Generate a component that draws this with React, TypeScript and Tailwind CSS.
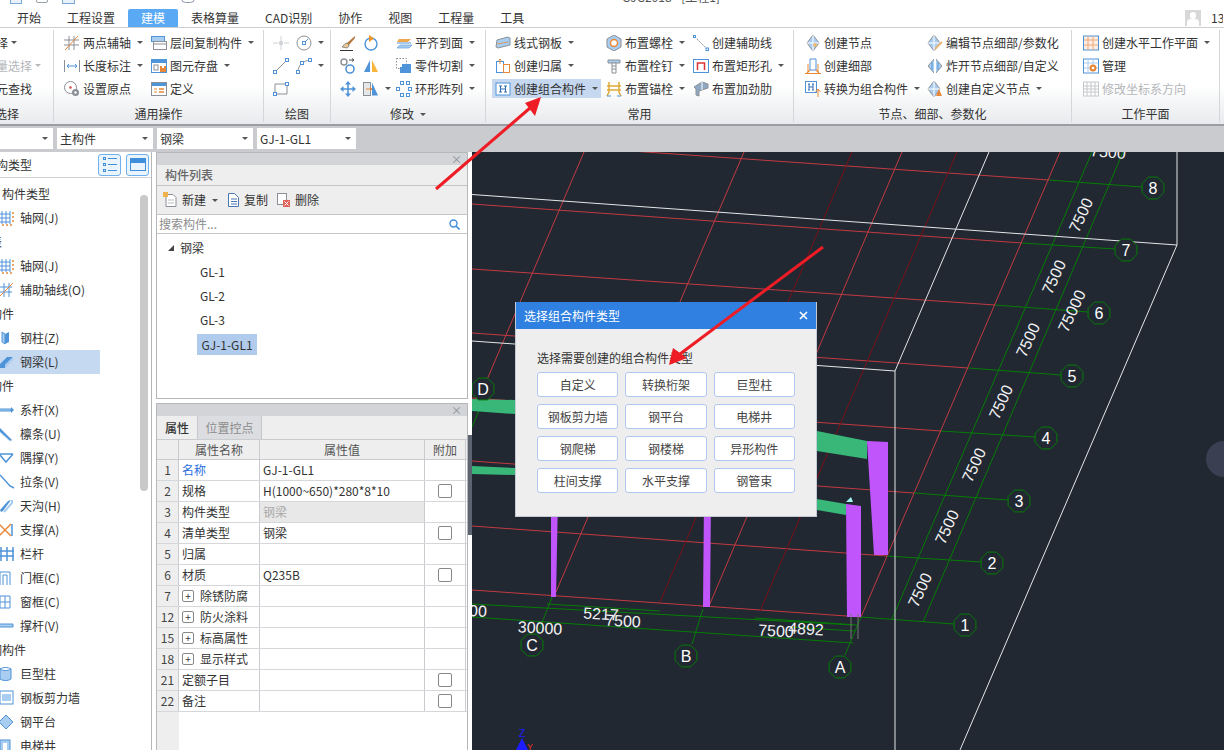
import React from "react";

const B = "#4f94d8";
const LB = "#a9cdf0";
const O = "#e8893a";
const G = "#8b9096";

const Ic = ({ children, w = 16 }: { children?: React.ReactNode; w?: number }) => (
  <svg width={w} height={16} viewBox={`0 0 ${w} 16`} fill="none" className="shrink-0">
    {children}
  </svg>
);

const icons: Record<string, React.ReactNode> = {
  twoAxis: (<><path d="M0 5h15M0 10h15M5 1v14M10 1v14" stroke={G} /><path d="M1 15 14 1" stroke={O} /></>),
  copyLayer: (<><rect x=".5" y="1.5" width="13" height="5" fill={LB} stroke={B} /><rect x="2.5" y="6.5" width="13" height="8" fill="#fff" stroke={G} /><path d="M3 9h12" stroke={G} /></>),
  dim: (<><path d="M.5 2v12M15.5 2v12" stroke={G} /><path d="M3 8h10M3 8l2-2M3 8l2 2M13 8l-2-2M13 8l-2 2" stroke={B} /></>),
  save: (<><rect x=".5" y="1.5" width="15" height="13" fill="#fff" stroke={B} /><rect x="1" y="2" width="14" height="3" fill={B} /><rect x="3" y="7" width="4" height="5" stroke={G} /><rect x="9" y="8" width="6" height="6" fill={O} /><rect x="11" y="8" width="2" height="2" fill="#fff" /></>),
  origin: (<><circle cx="6.5" cy="6.5" r="6" fill="#fff" stroke={G} /><circle cx="6.5" cy="6.5" r="1.3" fill="#d9534f" /><circle cx="11.5" cy="11.5" r="3.5" fill={G} /><circle cx="11.5" cy="11.5" r="1.2" fill="#fff" /></>),
  define: (<><rect x=".5" y="1.5" width="15" height="13" fill="#fff" stroke={G} /><rect x="1" y="2" width="14" height="3" fill={B} /><path d="M3 8h3M3 11h3" stroke={O} /><path d="M8 8h5M8 11h5" stroke={O} strokeWidth="1.5" /></>),
  point: (<><path d="M0 8h5M11 8h5M8 1v5M8 10v5" stroke="#cfd2d6" /><circle cx="8" cy="8" r="2.2" fill="#cfd2d6" /></>),
  circle: (<><circle cx="8" cy="8" r="7" fill="#fff" stroke={G} /><rect x="6.5" y="6.5" width="3" height="3" stroke={B} /><path d="M9 7l3-3" stroke={B} /></>),
  line: (<><path d="M2 14 14 2" stroke={G} /><rect x=".5" y="12.5" width="3" height="3" fill="#fff" stroke={B} /><rect x="12.5" y=".5" width="3" height="3" fill="#fff" stroke={B} /></>),
  arc: (<><path d="M2 14C2 7 7 3 14 2" stroke={G} /><rect x=".5" y="12.5" width="3" height="3" fill="#fff" stroke={B} /><rect x="12.5" y=".5" width="3" height="3" fill="#fff" stroke={B} /><rect x="4.5" y="3.5" width="3" height="3" fill="#fff" stroke={B} /></>),
  rect: (<><path d="M2 3h12l0 10H2z" stroke={G} /><rect x=".5" y="11.5" width="3" height="3" fill="#fff" stroke={B} /><rect x="12.5" y="1.5" width="3" height="3" fill="#fff" stroke={B} /></>),
  brush: (<><path d="M15 1 7 8l2 2 6-7z" fill="#b5763c" /><path d="M7 8c-3 0-3 3-5 4l5 1c2-1 2-2 2-3z" fill="#e7c69a" stroke="#555" strokeWidth=".6" /><path d="M0 15.5h13" stroke="#333" /></>),
  rotate: (<><circle cx="8" cy="9" r="6" stroke={B} strokeWidth="1.4" /><path d="M6 0v7l5-3.5z" fill="#ee9326" /></>),
  align: (<><path d="M3 4h12L12 7H1z" fill="#f0a64a" /><path d="M1 8h14" stroke={B} /><path d="M4 10h12l-3 3H1z" fill={LB} stroke={B} strokeWidth=".6" /></>),
  gears: (<><circle cx="4" cy="4" r="3" fill="#fff" stroke={G} strokeWidth="1.4" /><circle cx="10" cy="11" r="4" fill="#fff" stroke={B} strokeWidth="1.6" /><path d="M9 2h5l-2-1.5M14 2l-2 1.5" stroke="#555" /></>),
  mirror: (<><path d="M7 2v12H1z" fill={B} /><path d="M9 2v12h6z" fill="#f6b73c" /></>),
  cut: (<><rect x=".5" y=".5" width="10" height="10" stroke={G} strokeDasharray="1.5 1.5" /><path d="M6 6h9v9H4V9h2z" fill={B} /></>),
  move: (<><path d="M8 1v14M1 8h14" stroke={B} strokeWidth="1.6" /><path d="M8 0l3 3.5H5zM8 16l3-3.5H5zM0 8l3.5-3v6zM16 8l-3.5-3v6z" fill={B} /></>),
  flip: (<><rect x=".5" y="1.5" width="7" height="13" fill="#e6e7e9" stroke={G} /><path d="M9 1.5 15 14.5H9z" fill={B} /><path d="M3 8h6M7 6l2 2-2 2" stroke={O} /></>),
  array: (<><g stroke={B} fill="#fff"><rect x="4.5" y=".5" width="3" height="3" /><rect x="10.5" y=".5" width="3" height="3" /><rect x=".5" y="6.5" width="3" height="3" /><rect x="12.5" y="6.5" width="3" height="3" /><rect x="4.5" y="12.5" width="3" height="3" /><rect x="10.5" y="12.5" width="3" height="3" /></g></>),
  plate: (<><path d="M2 5 13 2l2 1v7L3 13l-2-1z" fill={LB} stroke={G} /><path d="M2 9l11-2" stroke="#d49a5a" /></>),
  owner: (<><rect x="1.5" y="3.5" width="7" height="11" fill="#fff" stroke={B} /><rect x="8.5" y="6.5" width="6" height="8" fill="#fff" stroke={O} /><path d="M5 6V1M3.5 2.5 5 1l1.5 1.5" stroke={O} /></>),
  combo: (<><rect x="1" y="2" width="14" height="12" fill="#fff" stroke={B} /><path d="M4 5h3M4 11h3M5.500 5v6M9 5h3M9 11h3M10.500 5v6M5.500 8h5" stroke="#2f6eb5" /></>),
  bolt: (<><path d="M8 0l7 4v8l-7 4-7-4V4z" fill={LB} stroke={G} /><circle cx="8" cy="8" r="3.5" fill="#fff" stroke={O} strokeWidth="1.5" /></>),
  stud: (<><path d="M2 2h12v3H2z" fill={LB} stroke={G} /><path d="M6 5h4v10H6z" fill="#fff" stroke={G} /><path d="M6 8h4M6 11h4" stroke={G} /></>),
  anchor: (<><path d="M3 1v10l-2 4M13 1v10l2 4M1 5h14M1 9h14" stroke="#e0a93a" strokeWidth="1.5" /><path d="M1 15h4M11 15h4" stroke={B} /></>),
  aux: (<><path d="M2 2l12 12" stroke={G} strokeDasharray="2 1" /><rect x=".5" y=".5" width="2" height="2" stroke={B} /><rect x="13" y="13" width="2.500" height="2.500" stroke={B} /></>),
  rectHole: (<><rect x=".5" y="1.5" width="15" height="13" fill="#fff" stroke={B} /><path d="M4.500 12V5h7v7" stroke="#d33" strokeWidth="1.500" /></>),
  rib: (<><path d="M1 6l8-5 6 2v4l-6 2-3 1v5l-3-1V8z" fill="#8fa9c4" stroke={G} /><path d="M9 1v8" stroke="#fff" /></>),
  node: (<><path d="M8 0l6 8-6 8-6-8z" fill={LB} stroke={G} /><path d="M8 0v16M2 8h12" stroke="#fff" /><circle cx="10" cy="10" r="2" fill="#e9b876" /></>),
  detail: (<><path d="M5 1h6v11H5z" fill="#fff" stroke={B} /><path d="M5 12 2 15M11 12l3 3M0 15.500h16" stroke={O} strokeWidth="1.200" /><path d="M3 6v8M13 6v8" stroke={O} /></>),
  convert: (<><rect x=".5" y=".5" width="11" height="11" fill="#fff" stroke={B} /><path d="M3 3h2M3 9h2M4 3v6M7 3h2M7 9h2M8 3v6M4 6h4" stroke="#2f6eb5" /><path d="M13 8v8M10.500 11 13 8l2.500 3" stroke={O} /></>),
  nodeEdit: (<><path d="M7 0l6 8-6 8-6-8z" fill={LB} stroke={G} /><path d="M7 0v16M1 8h12" stroke="#fff" /><path d="M8 14l7-7" stroke="#e9b876" strokeWidth="2" /></>),
  nodeBoom: (<><path d="M8 0l7 8-7 8-7-8z" fill={LB} stroke={G} /><path d="M8 0v16" stroke="#fff" strokeWidth="2" /><path d="M5 4v8M11 4v8" stroke={B} /></>),
  nodeNew: (<><path d="M7 0l6 8-6 8-6-8z" fill={LB} stroke={G} /><path d="M7 0v16M1 8h12" stroke="#fff" /><path d="M12 8l3 7H9z" fill={O} /></>),
  plane: (<><rect x=".5" y="1" width="15" height="14" fill="#fdeee3" stroke={B} /><path d="M5 1v14M10 1v14M1 5h14M1 10h14" stroke="#eba87a" /></>),
  manage: (<><rect x=".5" y="1" width="15" height="14" fill="#fff" stroke={B} /><path d="M5 1v14M10 1v14M1 5h14M1 10h14" stroke={LB} /><circle cx="10" cy="10" r="3.500" fill={O} /><circle cx="10" cy="10" r="1.300" fill="#fff" /></>),
  coord: (<><rect x=".5" y="1" width="15" height="14" fill="#fff" stroke="#c6c8cb" /><path d="M4 1v14M8 1v14M12 1v14M1 5h14M1 8h14M1 11h14" stroke="#c6c8cb" /></>),
};

const Caret = ({ dim }: { dim?: boolean }) => (
  <span className={`ml-[3px] h-0 w-0 border-x-[3px] border-t-[3px] border-x-transparent ${dim ? "border-t-[#b9b9b9]" : "border-t-[#555555]"}`} />
);

const Item = ({ icon, text, caret, dim, active }: { icon: string; text: string; caret?: boolean; dim?: boolean; active?: boolean }) => (
  <div className={active ? "-ml-[3px] my-[2px] flex h-[19px] w-[109px] items-center gap-[3px] bg-[#c5d8f0] pl-[3px]" : "flex h-[23px] items-center gap-[3px] whitespace-nowrap"}>
    <Ic>{icons[icon]}</Ic>
    <span className={dim ? "text-[#b4b6b9]" : "text-[#333333]"}>{text}</span>
    {caret && <Caret dim={dim} />}
  </div>
);

const Group = ({ w, label, pl, children, labelExtra, labelLeft }: { w: number; label: string; pl: number; children: React.ReactNode; labelExtra?: boolean; labelLeft?: boolean }) => (
  <div className="mt-[2px] flex h-[92px] shrink-0 flex-col overflow-hidden border-r border-[#d5d7da] pt-[1px]" style={{ width: w }}>
    <div className="flex h-[69px]" style={{ paddingLeft: pl }}>{children}</div>
    <div className={`mt-[6px] flex h-[16px] items-center gap-[3px] text-[#333333] ${labelLeft ? "-ml-[5px]" : "justify-center"}`}>
      {label}
      {labelExtra && <Caret />}
    </div>
  </div>
);

const Col = ({ w, children }: { w?: number; children: React.ReactNode }) => (
  <div className="flex shrink-0 flex-col" style={w ? { width: w } : undefined}>{children}</div>
);

const IconBtn = ({ icon, caret }: { icon: string; caret?: boolean }) => (
  <div className="flex h-[23px] items-center gap-[3px]">
    <Ic>{icons[icon]}</Ic>
    {caret && <Caret />}
  </div>
);

const tabs = ["开始", "工程设置", "建模", "表格算量", "CAD识别", "协作", "视图", "工程量", "工具"];

const listIcons: Record<string, React.ReactNode> = {
  grid: (<><path d="M-2 4h12M-2 8h12M-2 12h12M2 1v13M6 1v13M10 1v13" stroke={B} /><path d="M13 2v11M2 15h11" stroke={O} strokeDasharray="2 2" strokeWidth="1.500" /></>),
  aux: (<><path d="M-2 5h14M-2 10h14M4 1v14M9 1v14" stroke={B} /><path d="M-1 15 13 1" stroke={O} /></>),
  col: (<><path d="M2 2l3 2v10l-3-2z" fill={LB} stroke={B} /><path d="M5 4l4-2v10l-4 2z" fill={B} /></>),
  beam: (<><path d="M-1 11 7 3h6l-8 8v3h-6z" fill={B} /><path d="M5 11l8-8v3l-8 8z" fill={LB} /></>),
  tie: (<><path d="M-1 7h12v2H-1z" fill={LB} stroke={B} /><path d="M11 5l3 3-3 3z" fill={B} /></>),
  purlin: (<path d="M0 2l12 12-2 1L-1 5z" fill={B} stroke={LB} />),
  knee: (<><path d="M-1 4h14M0 5l6 7 7-8" stroke={B} strokeWidth="1.500" /></>),
  rod: (<path d="M0 1 10 12l4 2" stroke={B} strokeWidth="1.500" />),
  gutter: (<><path d="M0 12 8 3l3-1-8 11-2 1z" fill={B} /><path d="M4 14 12 5V2" stroke={LB} strokeWidth="2" /></>),
  brace: (<><path d="M-1 2 11 14M11 2-1 14" stroke={O} strokeWidth="1.500" /><path d="M12 2v12" stroke={B} strokeWidth="1.500" /></>),
  rail: (<path d="M1 1v14M7 1v14M13 1v14M-1 5h15M-1 10h15" stroke={B} strokeWidth="1.500" />),
  door: (<path d="M0 15V2h10v13M3 15V5h4v10" stroke={B} />),
  win: (<path d="M0 2h10v12H0zM5 2v12M0 8h10" stroke={B} />),
  strut: (<path d="M-1 6h14v3H-1z" fill={LB} stroke={B} />),
  giant: (<><path d="M0 3h11v10c-3 2-8 2-11 0z" fill={LB} stroke={B} /><path d="M0 3c3-2 8-2 11 0-3 2-8 2-11 0z" fill="#fff" stroke={B} /></>),
  wall: (<><rect x="0" y="1" width="13" height="13" fill="#fff" stroke={B} /><rect x="2" y="4" width="9" height="7" fill={LB} /></>),
  plat: (<path d="M6 1l7 7-7 7-7-7z" fill={LB} stroke={B} />),
  lift: (<><rect x="0" y="2" width="10" height="13" fill={LB} stroke={B} /><rect x="3" y="5" width="4" height="7" fill="#fff" /></>),
};

const leftRows: { t: string; i?: string; ml?: number; sel?: boolean }[] = [
  { t: "构件类型", ml: 2 },
  { t: "轴网(J)", i: "grid" },
  { t: "表", ml: -10 },
  { t: "轴网(J)", i: "grid" },
  { t: "辅助轴线(O)", i: "aux" },
  { t: "构件", ml: -10 },
  { t: "钢柱(Z)", i: "col" },
  { t: "钢梁(L)", i: "beam", sel: true },
  { t: "构件", ml: -10 },
  { t: "系杆(X)", i: "tie" },
  { t: "檩条(U)", i: "purlin" },
  { t: "隅撑(Y)", i: "knee" },
  { t: "拉条(V)", i: "rod" },
  { t: "天沟(H)", i: "gutter" },
  { t: "支撑(A)", i: "brace" },
  { t: "栏杆", i: "rail" },
  { t: "门框(C)", i: "door" },
  { t: "窗框(C)", i: "win" },
  { t: "撑杆(V)", i: "strut" },
  { t: "钢构件", ml: -10 },
  { t: "巨型柱", i: "giant" },
  { t: "钢板剪力墙", i: "wall" },
  { t: "钢平台", i: "plat" },
  { t: "电梯井", i: "lift" },
];

const props: { n: string; name: string; val?: string; chk?: boolean; exp?: boolean; link?: boolean; dis?: boolean }[] = [
  { n: "1", name: "名称", val: "GJ-1-GL1", link: true },
  { n: "2", name: "规格", val: "H(1000~650)*280*8*10", chk: true },
  { n: "3", name: "构件类型", val: "钢梁", dis: true },
  { n: "4", name: "清单类型", val: "钢梁", chk: true },
  { n: "5", name: "归属" },
  { n: "6", name: "材质", val: "Q235B", chk: true },
  { n: "7", name: "除锈防腐", exp: true },
  { n: "12", name: "防火涂料", exp: true },
  { n: "15", name: "标高属性", exp: true },
  { n: "18", name: "显示样式", exp: true },
  { n: "21", name: "定额子目", chk: true },
  { n: "22", name: "备注", chk: true },
];

const dialogBtns = ["自定义", "转换桁架", "巨型柱", "钢板剪力墙", "钢平台", "电梯井", "钢爬梯", "钢楼梯", "异形构件", "柱间支撑", "水平支撑", "钢管束"];

const PanelBar = () => (
  <div className="flex h-[12px] items-center justify-end bg-[#d2d4d8] pr-[5px] text-[11px] leading-none text-[#8a8d92]">×</div>
);

const Hex = ({ x, y, t }: { x: number; y: number; t: string }) => {
  const pts = Array.from({ length: 8 }, (_, k) => {
    const a = (Math.PI / 4) * k + Math.PI / 8;
    return `${(x + 11.8 * Math.cos(a)).toFixed(1)},${(y + 11.8 * Math.sin(a)).toFixed(1)}`;
  }).join(" ");
  return (
    <>
      <polygon points={pts} fill="#212832" stroke="#067d06" />
      <text x={x} y={y + 6} textAnchor="middle" fontSize="16" fill="#fff">{t}</text>
    </>
  );
};

const Dim = ({ x, y, t, r }: { x: number; y: number; t: string; r: number }) => (
  <text x={x} y={y} textAnchor="middle" dominantBaseline="central" fontSize="16" fill="#f2f2f2" transform={`rotate(${r} ${x} ${y})`}>{t}</text>
);

const Canvas = () => {
  const red = "#c23a42";
  const dark = "#7a1016";
  const green = "#067d06";
  const cross: [number, number, number, number, string][] = [
    [472, 141, 1049, 181, red],
    [472, 205, 1022, 244, red],
    [472, 270, 995, 306, red],
    [472, 334, 968, 369, red],
    [472, 399, 941, 432, red],
    [472, 462, 914, 494, red],
    [472, 527, 887, 557, red],
    [472, 591, 861, 618, red],
    [483, 390, 584, 153, red],
    [556, 593, 744, 153, red],
    [660, 603, 852, 153, dark],
    [709, 607, 902, 153, red],
    [760, 612, 957, 153, dark],
    [861, 618, 1060, 153, red],
  ];
  const greens: [number, number, number, number][] = [
    [1049, 181, 1142, 188], [1022, 244, 1115, 250], [995, 306, 1088, 313], [968, 369, 1061, 376],
    [941, 432, 1035, 438], [914, 494, 1008, 501], [887, 557, 981, 563], [861, 618, 954, 625],
    [1092, 153, 892, 620], [1123, 153, 923, 623],
    [472, 605, 853, 626], [472, 618, 853, 644], [547, 605, 660, 612], [755, 619, 857, 626], [790, 628, 855, 632],
    [552, 598, 538, 634], [703, 610, 692, 645], [861, 618, 845, 656], [483, 402, 472, 428],
  ];
  return (
    <svg viewBox="472 153 752 598" width="752" height="598" className="block [font-family:'Liberation_Sans',sans-serif]">
      <rect x="472" y="153" width="752" height="598" fill="#212832" />
      {cross.map(([a, b, c, d, s], i) => <line key={i} x1={a} y1={b} x2={c} y2={d} stroke={s} />)}
      {greens.map(([a, b, c, d], i) => <line key={i} x1={a} y1={b} x2={c} y2={d} stroke={green} />)}
      <path d="M472 195.500 1177 246M1177 153V246L960 751M989 153 895 372V751M472 342 895 372" stroke="#e4e6e8" fill="none" />
      <path d="M472 400 515 401V415L472 412zM472 467 515 469V476L472 475zM817 432 867 442V460L817 452zM817 500 846 505V516L817 511z" fill="#38b778" />
      <path d="M867 442 888 443V556H874zM846 505 861 507V618H847zM704 500H711L710 608H703zM551 500H558L556 598H551z" fill="#bf55fb" />
      <path d="M846 503 851 498 853 503z" fill="#9ff3f3" />
      <path d="M851 615v25M858 615v25" stroke="#777" />
      <Hex x={483} y={390} t="D" />
      <Hex x={532} y={646} t="C" />
      <Hex x={686} y={657} t="B" />
      <Hex x={840} y={668} t="A" />
      <Hex x={965} y={626} t="1" />
      <Hex x={992} y={564} t="2" />
      <Hex x={1019} y={502} t="3" />
      <Hex x={1046} y={439} t="4" />
      <Hex x={1072} y={377} t="5" />
      <Hex x={1099} y={314} t="6" />
      <Hex x={1126} y={251} t="7" />
      <Hex x={1153} y={189} t="8" />
      <Dim x={1108} y={153} t="7500" r={5} />
      <Dim x={1081} y={216} t="7500" r={-65} />
      <Dim x={1054} y={278} t="7500" r={-65} />
      <Dim x={1072} y={312} t="75000" r={-65} />
      <Dim x={1028} y={341} t="7500" r={-65} />
      <Dim x={1001} y={403} t="7500" r={-65} />
      <Dim x={974} y={466} t="7500" r={-65} />
      <Dim x={947} y={528} t="7500" r={-65} />
      <Dim x={920} y={591} t="7500" r={-65} />
      <Dim x={478} y={612} t="00" r={3} />
      <Dim x={540} y={629} t="30000" r={3} />
      <Dim x={601} y={615} t="5217" r={3} />
      <Dim x={623} y={622} t="7500" r={3} />
      <Dim x={776} y={632} t="7500" r={3} />
      <Dim x={806} y={630} t="4892" r={3} />
      <circle cx="1224" cy="460" r="18" fill="#3a3f52" />
      <text x="522" y="738" textAnchor="middle" fontSize="11" fill="#1c1cff">Z</text>
      <path d="M522 739 516 751H528z" fill="#1c1cff" />
      <text x="527" y="751" fontSize="9" fill="#e03030">Y</text>
    </svg>
  );
};

export default function App() {
  return (
    <div className="relative h-[751px] w-[1224px] overflow-hidden bg-white text-[12px] leading-none text-[#333333] [font-family:'Noto_Sans_CJK_SC','Liberation_Sans',sans-serif]">
      {/* title strip, only the bottom of it is in the shot */}
      <div className="relative h-[9px] overflow-hidden">
        <div className="flex h-[9px] items-start gap-[14px] pl-[10px]">
          <div className="-mt-[6px] h-[10px] w-[12px] border border-[#7aa7d6] bg-[#e9f1fa]" />
          <div className="-mt-[6px] h-[9px] w-[12px] rounded-[2px] border border-[#9aa0a8]" />
          <div className="-mt-[6px] h-[10px] w-[13px] border border-[#7aa7d6] bg-[#e9f1fa]" />
          <div className="-mt-[6px] ml-[12px] h-[6px] w-[10px] border-b border-[#8a97a8]" />
          <div className="-mt-[6px] ml-[12px] h-[4px] w-[10px] border-b border-[#d0d0d0]" />
          <div className="-mt-[6px] ml-[20px] h-[9px] w-[14px] rounded-full border border-[#8a97a8]" />
        </div>
        <div className="absolute left-[622px] -top-[9px] text-[12px] leading-[12px] text-[#555555]">GJG2018 - [工程1]</div>
      </div>

      {/* tabs */}
      <div className="flex h-[19px] items-stretch border-b border-[#cccfd2] pl-[4px]">
        {tabs.map((t) => (
          <div key={t} className={t === "建模" ? "flex items-center rounded-t-[2px] bg-[#5aa9f5] px-[13px] text-white" : "flex items-center px-[13px] text-[#333333]"}>
            {t}
          </div>
        ))}
        <div className="ml-auto flex items-center pr-[1px]">
          <div className="relative mr-[10px] h-[16px] w-[16px] overflow-hidden bg-[#d8d8d8]">
            <div className="mx-auto mt-[2px] h-[7px] w-[6px] rounded-full bg-white" />
            <div className="mx-auto h-[7px] w-[12px] rounded-t-[4px] bg-white" />
          </div>
          <span className="w-[12px] overflow-hidden">13</span>
        </div>
      </div>

      {/* ribbon */}
      <div className="flex h-[98px] border-b-2 border-[#9a9da1] bg-gradient-to-b from-white from-60% to-[#e8eaed]">
        <Group w={54} label="选择" pl={0} labelLeft>
          <div className="flex flex-col">
            <div className="flex h-[23px] items-center"><span className="-ml-[16px]">选择</span><Caret /></div>
            <div className="flex h-[23px] items-center text-[#b4b6b9]"><span className="-ml-[16px]">批量选择</span><Caret dim /></div>
            <div className="flex h-[23px] items-center"><span className="-ml-[16px]">图元查找</span></div>
          </div>
        </Group>
        <Group w={210} label="通用操作" pl={10}>
          <Col w={87}>
            <Item icon="twoAxis" text="两点辅轴" caret />
            <Item icon="dim" text="长度标注" caret />
            <Item icon="origin" text="设置原点" />
          </Col>
          <Col>
            <Item icon="copyLayer" text="层间复制构件" caret />
            <Item icon="save" text="图元存盘" caret />
            <Item icon="define" text="定义" />
          </Col>
        </Group>
        <Group w={67} label="绘图" pl={9}>
          <Col w={23}>
            <IconBtn icon="point" />
            <IconBtn icon="line" />
            <IconBtn icon="rect" />
          </Col>
          <Col>
            <IconBtn icon="circle" caret />
            <IconBtn icon="arc" caret />
          </Col>
        </Group>
        <Group w={155} label="修改" pl={9} labelExtra>
          <Col w={23}>
            <IconBtn icon="brush" />
            <IconBtn icon="gears" />
            <IconBtn icon="move" />
          </Col>
          <Col w={33}>
            <IconBtn icon="rotate" />
            <IconBtn icon="mirror" />
            <IconBtn icon="flip" caret />
          </Col>
          <Col>
            <Item icon="align" text="平齐到面" caret />
            <Item icon="cut" text="零件切割" caret />
            <Item icon="array" text="环形阵列" caret />
          </Col>
        </Group>
        <Group w={308} label="常用" pl={9}>
          <Col w={111}>
            <Item icon="plate" text="线式钢板" caret />
            <Item icon="owner" text="创建归属" caret />
            <Item icon="combo" text="创建组合构件" caret active />
          </Col>
          <Col w={87}>
            <Item icon="bolt" text="布置螺栓" caret />
            <Item icon="stud" text="布置栓钉" caret />
            <Item icon="anchor" text="布置锚栓" caret />
          </Col>
          <Col>
            <Item icon="aux" text="创建辅助线" />
            <Item icon="rectHole" text="布置矩形孔" caret />
            <Item icon="rib" text="布置加劲肋" />
          </Col>
        </Group>
        <Group w={278} label="节点、细部、参数化" pl={11}>
          <Col w={122}>
            <Item icon="node" text="创建节点" />
            <Item icon="detail" text="创建细部" />
            <Item icon="convert" text="转换为组合构件" caret />
          </Col>
          <Col>
            <Item icon="nodeEdit" text="编辑节点细部/参数化" />
            <Item icon="nodeBoom" text="炸开节点细部/自定义" />
            <Item icon="nodeNew" text="创建自定义节点" caret />
          </Col>
        </Group>
        <Group w={148} label="工作平面" pl={11}>
          <Col>
            <Item icon="plane" text="创建水平工作平面" caret />
            <Item icon="manage" text="管理" />
            <Item icon="coord" text="修改坐标系方向" dim />
          </Col>
        </Group>
      </div>

      {/* selector row */}
      <div className="flex h-[26px] bg-[#c9cbcf] pt-[2px] pb-[3px]">
        {[
          { w: 53, t: "" },
          { w: 96, t: "主构件" },
          { w: 96, t: "钢梁" },
          { w: 99, t: "GJ-1-GL1" },
        ].map((s, i) => (
          <div key={i} className="mr-[4px] flex items-center justify-between bg-white pl-[3px] pr-[5px]" style={{ width: s.w }}>
            <span>{s.t}</span>
            <span className="h-0 w-0 border-x-[3px] border-t-[3px] border-x-transparent border-t-[#555555]" />
          </div>
        ))}
      </div>

      <div className="flex h-[598px]">
        {/* left tree */}
        <div className="flex w-[156px] shrink-0">
          <div className="relative w-[152px] border-r border-[#b5b7ba]">
            <div className="flex h-[26px] items-center justify-between border-b border-[#cfd1d4] pr-[2px]">
              <span className="-ml-[4px]">构类型</span>
              <div className="flex gap-[5px]">
                <div className="flex h-[22px] w-[23px] flex-col items-center justify-center gap-[3px] rounded-[3px] border border-[#6fb0ee] bg-[#eaf4fd]">
                  {[0, 1, 2].map((k) => (
                    <div key={k} className="flex items-center gap-[2px]">
                      <div className="h-[3px] w-[3px] border border-[#3f8fdc]" />
                      <div className="h-px w-[9px] bg-[#3f8fdc]" />
                    </div>
                  ))}
                </div>
                <div className="flex h-[22px] w-[23px] items-center justify-center rounded-[3px] border border-[#6fb0ee] bg-[#eaf4fd]">
                  <div className="h-[13px] w-[16px] border border-[#3f8fdc]">
                    <div className="h-[4px] bg-[#3f8fdc]" />
                  </div>
                </div>
              </div>
            </div>
            <div className="h-[572px] overflow-hidden pt-[4px]">
              {leftRows.map((r, i) => (
                <div key={i} className={`flex h-[24px] items-center ${r.sel ? "w-[100px] bg-[#c5d9f1]" : ""}`}>
                  {r.i ? (
                    <>
                      <svg width="20" height="16" viewBox="0 0 20 16" fill="none" className="shrink-0">{listIcons[r.i]}</svg>
                      <span>{r.t}</span>
                    </>
                  ) : (
                    <span style={{ marginLeft: r.ml }}>{r.t}</span>
                  )}
                </div>
              ))}
            </div>
            <div className="absolute right-[3px] top-[43px] h-[296px] w-[8px] rounded-[4px] bg-[#c9c9c9]" />
          </div>
        </div>

        {/* middle panels */}
        <div className="flex w-[316px] shrink-0 flex-col">
          <div className="flex h-[247px] w-[312px] flex-col border border-[#b5b7ba]">
            <PanelBar />
            <div className="flex h-[21px] items-center border-b border-[#c2c4c7] bg-[#eeeeee] pl-[8px] font-medium text-[#666666]">构件列表</div>
            <div className="flex h-[28px] items-center bg-[#eeeeee] pl-[6px]">
              <Ic w={14}><path d="M3 2.500h7l3 3v9H3z" fill="#fff" stroke={G} /><path d="M5 8h6M5 11h6" stroke="#bbb" /><rect x="0" y="0" width="5" height="5" fill="#f0b24a" /></Ic>
              <span className="ml-[5px]">新建</span>
              <span className="ml-[3px] flex items-center"><Caret /></span>
              <span className="ml-[8px]"><Ic w={14}><path d="M2.500 1.500h6l4 4v9h-10z" fill="#fff" stroke="#4a78b5" /><path d="M5 7h6M5 9.500h6M5 12h6" stroke="#4a78b5" /></Ic></span>
              <span className="ml-[4px]">复制</span>
              <span className="ml-[8px]"><Ic w={16}><rect x="1.500" y="1.500" width="9" height="11" fill="#fff" stroke={G} /><rect x="7" y="8" width="7" height="7" fill="#e0605a" /><path d="M8.500 9.500l4 4M12.500 9.500l-4 4" stroke="#fff" /></Ic></span>
              <span className="ml-[3px]">删除</span>
            </div>
            <div className="flex h-[20px] items-center justify-between border-y border-[#c2c4c7] bg-white pl-[2px] pr-[7px] text-[#8c8c8c]">
              <span>搜索构件...</span>
              <svg width="11" height="11" viewBox="0 0 11 11" fill="none"><circle cx="4.500" cy="4.500" r="3.500" stroke="#3f8fdc" strokeWidth="1.400" /><path d="M7 7l3.500 3.500" stroke="#3f8fdc" strokeWidth="1.600" /></svg>
            </div>
            <div className="flex-1 bg-white pt-[2px]">
              <div className="flex h-[24px] items-center pl-[10px]">
                <svg width="13" height="8" viewBox="0 0 13 8"><path d="M1 7 7 7 7 1z" fill="#444" /></svg>
                <span>钢梁</span>
              </div>
              {["GL-1", "GL-2", "GL-3"].map((g) => (
                <div key={g} className="flex h-[24px] items-center pl-[43px]">{g}</div>
              ))}
              <div className="ml-[40px] mt-[2px] flex h-[21px] w-[60px] items-center justify-center bg-[#b0cbec]">GJ-1-GL1</div>
            </div>
          </div>

          <div className="mt-[4px] flex h-[347px] w-[312px] flex-col border border-b-0 border-[#b5b7ba] bg-white">
            <PanelBar />
            <div className="flex h-[23px] bg-[#eeeeee]">
              <div className="flex w-[40px] items-center justify-center font-medium">属性</div>
              <div className="flex w-[65px] items-center justify-center border-x border-[#c6c8cb] bg-[#dcdde0] text-[#8c8c8c]">位置控点</div>
            </div>
            <div className="flex h-[21px] border-y border-[#c9cbce] bg-[#eeeeee] text-[#555555]">
              <div className="w-[22px] border-r border-[#c9cbce]" />
              <div className="flex w-[81px] items-center justify-center border-r border-[#c9cbce]">属性名称</div>
              <div className="flex w-[165px] items-center justify-center border-r border-[#c9cbce]">属性值</div>
              <div className="flex w-[41px] items-center justify-center border-r border-[#c9cbce]">附加</div>
            </div>
            {props.map((p) => (
              <div key={p.n} className="flex h-[21px] shrink-0 border-b border-[#d5d7da]">
                <div className="flex w-[22px] items-center justify-center border-r border-[#c9cbce] bg-[#eeeeee] text-[#444444]">{p.n}</div>
                <div className="flex w-[81px] items-center border-r border-[#c9cbce] pl-[3px]">
                  {p.exp && (
                    <span className="mr-[6px] flex h-[12px] w-[12px] items-center justify-center rounded-[2px] border border-[#888888] text-[10px]">+</span>
                  )}
                  <span className={p.link ? "text-[#2a6fe0]" : ""}>{p.name}</span>
                </div>
                <div className={`flex w-[165px] items-center border-r border-[#c9cbce] pl-[3px] ${p.dis ? "bg-[#e8e8e8] text-[#a8a8a8]" : ""}`}>{p.val}</div>
                <div className="flex w-[41px] items-center justify-center border-r border-[#c9cbce]">
                  {p.chk && <span className="h-[14px] w-[14px] rounded-[2px] border border-[#888888] bg-white" />}
                </div>
              </div>
            ))}
            <div className="w-[22px] flex-1 bg-[#eeeeee]" />
          </div>
        </div>

        <Canvas />
      </div>

      {/* splitter handle */}
      <div className="absolute left-[468px] top-[435px] h-[100px] w-[4px] bg-[#5b6470]" />

      {/* dialog */}
      <div className="absolute left-[515px] top-[302px] h-[215px] w-[302px] border border-t-0 border-[#c3cad6] bg-[#eeeeee]">
        <div className="flex h-[27px] items-center justify-between bg-[#2f80e0] pl-[8px] pr-[8px] text-white">
          <span>选择组合构件类型</span>
          <svg width="9" height="9" viewBox="0 0 9 9"><path d="M1 1l7 7M8 1 1 8" stroke="#fff" strokeWidth="1.600" /></svg>
        </div>
        <div className="pl-[21px]">
          <div className="mt-[18px] flex h-[21px] items-center">选择需要创建的组合构件类型</div>
          <div className="mt-[4px] grid w-[258px] grid-cols-3 gap-[7px]">
            {dialogBtns.map((b) => (
              <div key={b} className="flex h-[25px] items-center justify-center rounded-[3px] border border-[#b0c8ee] bg-white text-[#444444]">{b}</div>
            ))}
          </div>
        </div>
      </div>

      {/* red annotation arrows */}
      <svg className="pointer-events-none absolute inset-0" width="1224" height="751" viewBox="0 0 1224 751">
        <path d="M436 189 530 108" stroke="#ee1c25" strokeWidth="3" />
        <path d="M541 97 525 103 535 116z" fill="#ee1c25" />
        <path d="M823 247 680 354" stroke="#ee1c25" strokeWidth="3" />
        <path d="M669 365 673 348 687 358z" fill="#ee1c25" />
      </svg>
    </div>
  );
}
